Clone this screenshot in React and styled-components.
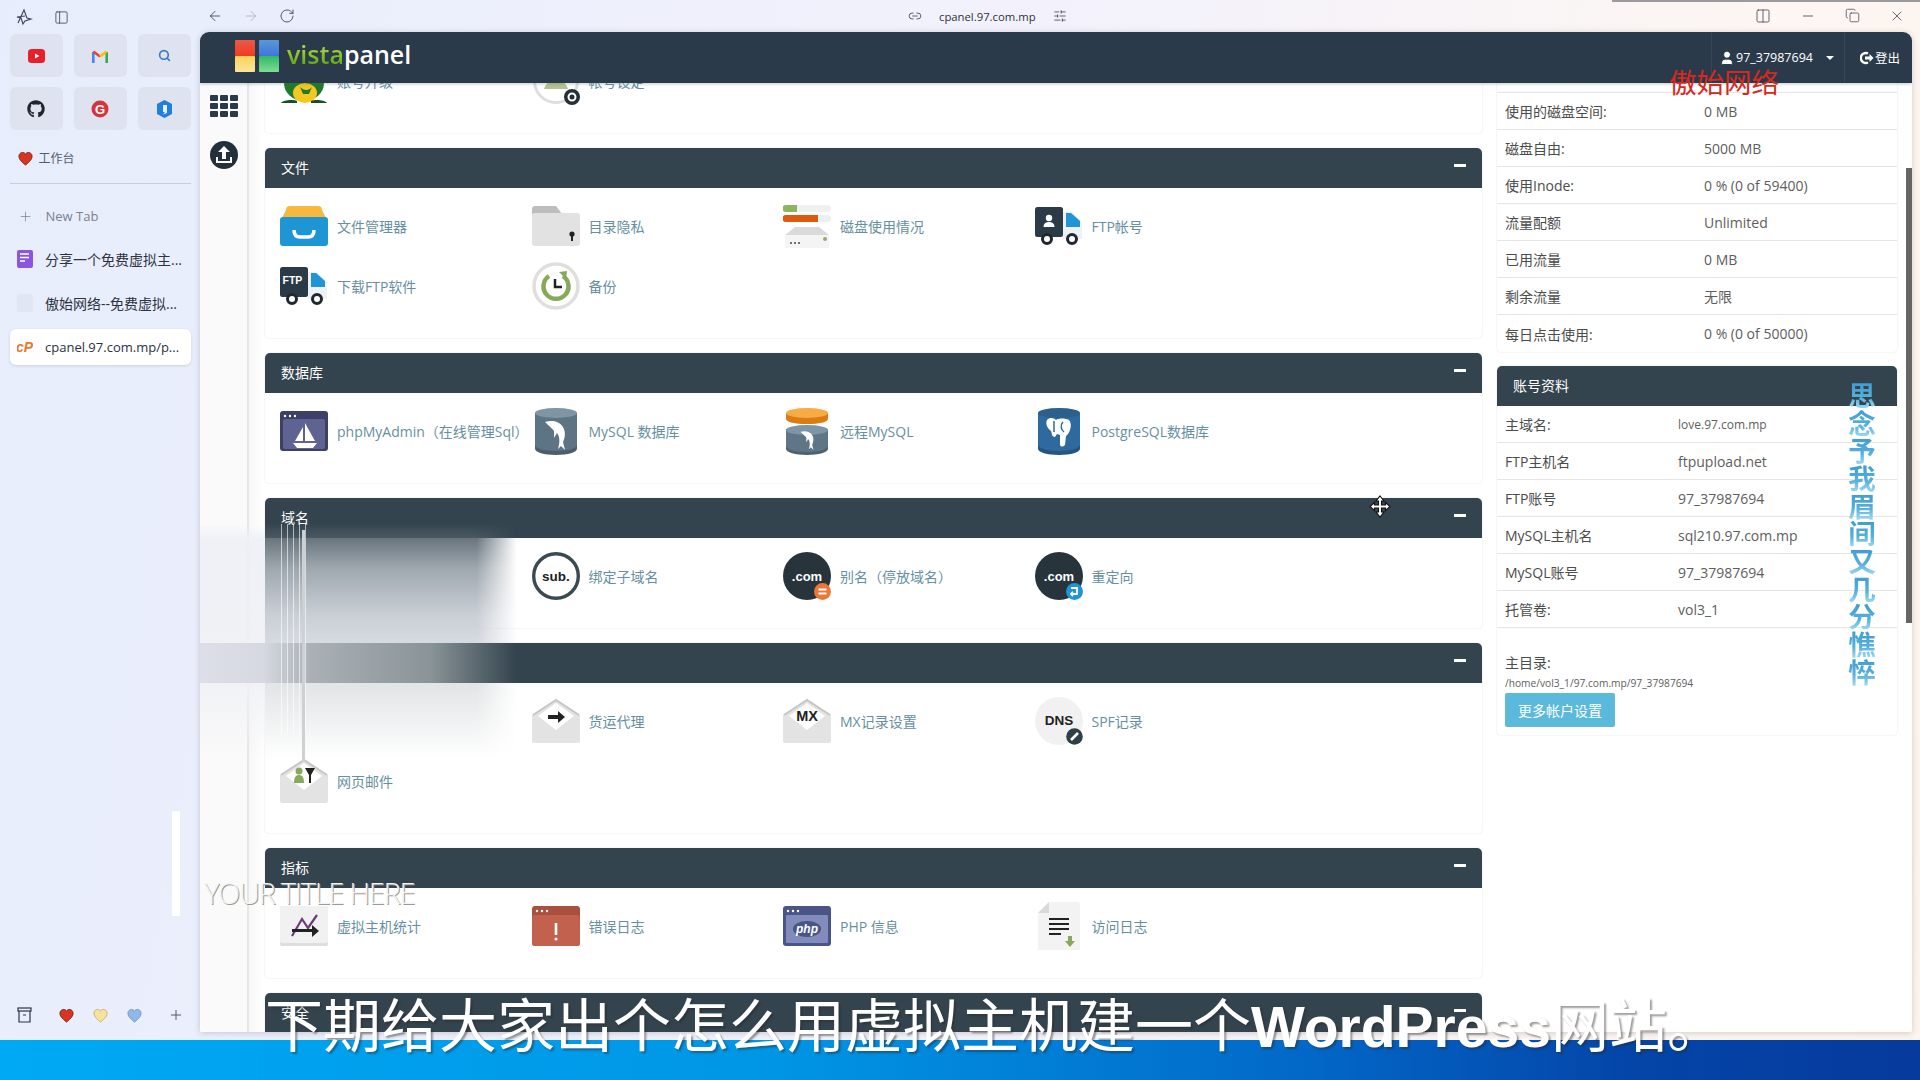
import React from 'react';
import styled, { createGlobalStyle } from 'styled-components';
import {
    ArrowLeft, ArrowRight, RotateCw, PanelLeft, Plus, Link2, SlidersHorizontal,
    Columns2, Minus, Copy, X, Search, User,
} from 'lucide-react';
import { FaGithub } from 'react-icons/fa';

const GlobalStyle = createGlobalStyle`
    html, body { margin: 0; padding: 0; background: #eef1fb; }
    * { box-sizing: border-box; }
    body { font-family: "Open Sans", "Noto Sans CJK SC", sans-serif; }
`;

const Screen = styled.div`
    position: relative;
    width: 1920px;
    height: 1080px;
    overflow: hidden;
    display: flex;
    flex-direction: column;
`;

const Upper = styled.div`
    height: 1040px;
    display: flex;
    background: linear-gradient(100deg, #e7edfc 0%, #eef0fc 30%, #f4f2fb 55%, #fdf6f2 85%, #fdf4ee 100%);
`;

const BottomStrip = styled.div`
    height: 40px;
    background: linear-gradient(to right, #00a9f4 0%, #0096e6 40%, #0268c8 68%, #0445a8 85%, #063a9c 100%);
`;

/* left browser sidebar */
const Sidebar = styled.aside`
    width: 200px;
    flex: none;
    display: flex;
    flex-direction: column;
    padding: 0 9px 15px 9.5px;
    color: #333;
`;

const SideTop = styled.div`
    height: 34px;
    display: flex;
    align-items: center;
    gap: 21px;
    padding-left: 5px;
    color: #3b4258;
`;

const TileGrid = styled.div`
    display: grid;
    grid-template-columns: repeat(3, 53px);
    grid-auto-rows: 43px;
    gap: 10px 11px;
`;

const Tile = styled.div`
    display: flex;
    align-items: center;
    justify-content: center;
    background: #dfe3ef;
    border-radius: 6px;
`;

const Workspace = styled.div`
    height: 26px;
    margin-top: 15px;
    display: flex;
    align-items: center;
    gap: 6px;
    padding-left: 8px;
    font-size: 12px;
    color: #555c6c;
`;

const SideDivider = styled.div`
    height: 1px;
    margin-top: 12px;
    background: #c9cede;
`;

const NewTab = styled.div`
    height: 20px;
    margin-top: 22px;
    display: flex;
    align-items: center;
    gap: 13px;
    padding-left: 8px;
    font-size: 13px;
    color: #7b8090;
`;

const TabRow = styled.div`
    height: 36px;
    margin-top: ${(p) => p.$top}px;
    display: flex;
    align-items: center;
    gap: 12px;
    padding-left: 7.5px;
    font-size: ${(p) => (p.$active ? 13 : 14)}px;
    white-space: nowrap;
    color: #2d3240;
    border-radius: 6px;
    background: ${(p) => (p.$active ? '#fff' : 'transparent')};
    box-shadow: ${(p) => (p.$active ? '0 1px 3px rgba(60,70,110,.18)' : 'none')};
`;

const TabBlank = styled.div`
    width: 16px;
    height: 18px;
    border-radius: 3px;
    background: #e2e6f2;
`;

const SideBottom = styled.div`
    margin-top: auto;
    height: 20px;
    display: flex;
    align-items: center;
    padding-left: 7.5px;
    color: #4a5064;
`;

const HeartGroup = styled.div`
    display: flex;
    gap: 19px;
    margin-left: 27px;
    margin-right: 26px;
`;

/* main column */
const MainColumn = styled.div`
    flex: 1;
    display: flex;
    flex-direction: column;
    padding-right: 8px;
`;

const Toolbar = styled.div`
    height: 32px;
    flex: none;
    display: grid;
    grid-template-columns: 708px auto 1fr;
    align-items: center;
    color: #3d4352;
`;

const NavGroup = styled.div`
    display: flex;
    gap: 20px;
    padding-left: 7px;
`;

const NavButton = styled.span`
    width: 16px;
    height: 16px;
    display: flex;
    color: ${(p) => (p.$off ? '#aeb4c4' : '#3d4352')};
`;

const AddressBar = styled.div`
    display: flex;
    align-items: center;
    gap: 17px;
    font-size: 11.3px;
    color: #2d3240;
`;

const WindowGroup = styled.div`
    display: flex;
    justify-content: flex-end;
    gap: 29px;
    padding-right: 7px;
`;

const Panel = styled.div`
    height: 1000px;
    display: flex;
    flex-direction: column;
    border-radius: 9px 9px 2px 2px;
    overflow: hidden;
    background: #fff;
    box-shadow: 0 1px 6px rgba(60, 50, 50, .22);
`;

const TopBar = styled.header`
    position: relative;
    z-index: 2;
    height: 51px;
    flex: none;
    display: flex;
    align-items: center;
    padding-left: 35px;
    background: #2a3a4a;
    box-shadow: 0 1px 3px rgba(60, 110, 100, .35);
`;

const LogoMark = styled.svg`
    margin-top: -3px;
`;

const LogoWord = styled.span`
    margin-left: 8px;
    margin-top: -6px;
    font-size: 25px;
    font-weight: 600;
    line-height: 1;
    color: #fff;
`;

const LogoGreen = styled.span`
    color: transparent;
    background: linear-gradient(to bottom, #b5e03e 20%, #5fa416 85%);
    -webkit-background-clip: text;
    background-clip: text;
`;

const UserMenu = styled.div`
    margin-left: auto;
    width: 134px;
    height: 51px;
    display: flex;
    align-items: center;
    padding-left: 7px;
    gap: 1px;
    font-size: 12.5px;
    color: #fff;
    border-left: 1px solid #34475a;
    border-right: 1px solid #34475a;
`;

const Caret = styled.span`
    width: 0;
    height: 0;
    margin-left: 12px;
    border-left: 4px solid transparent;
    border-right: 4px solid transparent;
    border-top: 4px solid #fff;
`;

const Logout = styled.div`
    width: 67px;
    display: flex;
    align-items: center;
    gap: 1px;
    padding-left: 15px;
    font-size: 12.5px;
    color: #fff;
    white-space: nowrap;
`;

const Below = styled.div`
    flex: 1;
    min-height: 0;
    display: flex;
`;

const Rail = styled.nav`
    width: 49px;
    flex: none;
    display: flex;
    flex-direction: column;
    align-items: center;
    gap: 24px;
    padding-top: 12px;
    background: #fafafa;
    border-right: 2px solid #e6e6e6;
`;

const RailGrid = styled.div`
    width: 28px;
    display: grid;
    grid-template-columns: repeat(3, 8px);
    grid-auto-rows: 6px;
    gap: 2px;
`;

const RailDot = styled.span`
    background: #2a3a4a;
    border-radius: 1px;
`;

const Content = styled.main`
    position: relative;
    flex: 1;
    min-width: 0;
    overflow: hidden;
    display: grid;
    grid-template-columns: 1217px 400px;
    column-gap: 15px;
    align-items: start;
    padding-left: 16px;
    background: linear-gradient(to right, #f7f7f7 0, #fff 14px);
`;

const ScrollThumb = styled.div`
    position: absolute;
    right: 0;
    top: 85px;
    width: 6px;
    height: 455px;
    background: #666;
`;

const LeftColumn = styled.div`
    margin-top: -80px;
    display: flex;
    flex-direction: column;
    gap: 15px;
`;

const RightColumn = styled.div`
    margin-top: -67px;
    display: flex;
    flex-direction: column;
    gap: 14px;
`;

const Section = styled.section`
    border-radius: 5px 5px 4px 4px;
    background: #fff;
    box-shadow: 0 0 2px rgba(0, 0, 0, .13);
    overflow: hidden;
`;

const SectionHeader = styled.div`
    height: 40px;
    display: flex;
    padding: 10px 16px 0 16px;
    font-size: 14px;
    line-height: 19px;
    color: #fff;
    background: #34444e;
`;

const Collapse = styled.span`
    width: 12px;
    height: 3px;
    margin-top: 6px;
    margin-left: auto;
    background: #fff;
`;

const SectionBody = styled.div`
    display: grid;
    grid-template-columns: repeat(4, 251.5px);
    grid-auto-rows: 60px;
    padding: 8px 0 22px 15px;
`;

const Item = styled.a`
    display: flex;
    align-items: center;
    gap: 9px;
    font-size: 14px;
    color: #66909f;
    white-space: nowrap;
`;

const IconSlot = styled.span`
    width: 48px;
    height: 48px;
    flex: none;
    display: block;
`;

const InfoRow = styled.div`
    height: 37px;
    display: flex;
    align-items: center;
    padding-left: 8px;
    font-size: 14px;
    color: #555;
    border-bottom: 1px solid #e6e6e6;
    &:last-child { border-bottom: 0; }
`;

const InfoLabel = styled.span`
    width: ${(p) => p.$width}px;
    flex: none;
    color: #4c4c4c;
`;

const InfoValue = styled.span`
    color: #5e5e5e;
    font-size: ${(p) => (p.$small ? 12 : 14)}px;
`;

const HomeBlock = styled.div`
    padding: 25px 8px 8px;
`;

const HomeLabel = styled.div`
    height: 20px;
    font-size: 14px;
    line-height: 20px;
    color: #4c4c4c;
`;

const HomePath = styled.div`
    height: 20px;
    padding-top: 1px;
    font-size: 10.2px;
    line-height: 19px;
    color: #5e5e5e;
`;

const MoreButton = styled.button`
    display: block;
    width: 110px;
    height: 34px;
    padding: 0;
    border: 0;
    border-radius: 2px;
    font: inherit;
    font-size: 14px;
    color: #fff;
    background: #5bb9dc;
`;

/* overlays burnt into the video */
const Watermark = styled.div`
    position: absolute;
    left: 1669px;
    top: 64px;
    z-index: 5;
    font-size: 27.5px;
    line-height: 38px;
    color: #d42a1e;
    white-space: nowrap;
`;

const VerticalLyric = styled.div`
    position: absolute;
    left: 1846px;
    top: 382px;
    z-index: 5;
    writing-mode: vertical-rl;
    font-size: 27.5px;
    line-height: 29px;
    font-weight: 700;
    letter-spacing: .15px;
    white-space: nowrap;
    color: transparent;
    background: repeating-linear-gradient(to bottom, #3f9cd2 0, #57b0dc 16px, #a5dcf2 27.65px);
    -webkit-background-clip: text;
    background-clip: text;
`;

const Caption = styled.div`
    position: absolute;
    left: 265px;
    top: 983px;
    z-index: 6;
    font-size: 58px;
    line-height: 84px;
    color: #fff;
    white-space: nowrap;
    text-shadow: 2px 2px 2px rgba(40, 40, 40, .45);
`;

const CaptionLatin = styled.span`
    font-family: "Liberation Sans", sans-serif;
    font-weight: 700;
    font-size: 57px;
`;

const VideoTitle = styled.div`
    position: absolute;
    left: 204px;
    top: 874px;
    z-index: 5;
    font-family: "Open Sans", sans-serif;
    font-weight: 300;
    font-size: 29px;
    line-height: 38px;
    letter-spacing: -1.27px;
    color: #f5f5f5;
    white-space: nowrap;
    text-shadow: 1px 1px 0 #9a9a90;
`;

const SmearRight = styled.div`
    position: absolute;
    left: 265px;
    top: 523px;
    z-index: 3;
    width: 252px;
    height: 240px;
    background: linear-gradient(to bottom,
        rgba(52, 68, 78, 0) 0,
        rgba(78, 92, 102, .85) 15px,
        rgba(150, 160, 168, .92) 45px,
        rgba(196, 201, 208, .92) 90px,
        rgba(210, 214, 222, .9) 120px,
        rgba(224, 227, 228, .95) 160px,
        rgba(255, 255, 255, 0) 237px);
    -webkit-mask-image: linear-gradient(to right, #000 0, #000 84%, transparent 100%);
    mask-image: linear-gradient(to right, #000 0, #000 84%, transparent 100%);
`;

const SmearBand = styled.div`
    position: absolute;
    left: 200px;
    top: 643px;
    z-index: 3;
    width: 316px;
    height: 40px;
    background: linear-gradient(to right, #dcdfe7 0, #d6d9e1 20%, #aab0b6 35%, #8a9498 73%, #34444e 100%);
`;

const SmearLeft = styled.div`
    position: absolute;
    left: 200px;
    top: 525px;
    z-index: 3;
    width: 65px;
    height: 237px;
    background: linear-gradient(to bottom,
        rgba(238, 240, 246, 0) 0,
        rgba(238, 240, 246, .9) 14px,
        rgba(240, 241, 245, .9) 158px,
        rgba(240, 241, 245, 0) 235px);
`;

const Streaks = styled.div`
    position: absolute;
    left: 281px;
    top: 524px;
    z-index: 4;
    width: 28px;
    height: 210px;
    background: repeating-linear-gradient(to right, rgba(255, 255, 255, .6) 0 1px, transparent 1px 6px);
`;

const StreakLine = styled.div`
    position: absolute;
    left: 302px;
    top: 530px;
    z-index: 4;
    width: 3px;
    height: 232px;
    background: #cdd1d4;
`;

const WhiteBar = styled.div`
    position: absolute;
    left: 172px;
    top: 811px;
    z-index: 3;
    width: 8px;
    height: 105px;
    background: #fff;
`;

const TopShadow = styled.div`
    position: absolute;
    left: 1612px;
    top: 0;
    z-index: 3;
    width: 308px;
    height: 2px;
    background: #9b9b9f;
`;

const CursorMark = styled.svg`
    position: absolute;
    left: 1369px;
    top: 495px;
    z-index: 5;
`;

const Base = ({ children }) => (
    <svg width="48" height="48" viewBox="0 0 48 48" fontFamily="Liberation Sans, sans-serif">{children}</svg>
);

const Cylinder = ({ top, body, foot, y = 1 }) => (
    <g>
        <path d={`M3 ${y + 5}V42c0 3 9 6 21 6s21-3 21-6V${y + 5}z`} fill={foot} />
        <path d={`M3 ${y + 5}V38c0 3 9 6 21 6s21-3 21-6V${y + 5}z`} fill={body} />
        <ellipse cx="24" cy={y + 5} rx="21" ry="5" fill={top} />
    </g>
);

const Dolphin = ({ scale = 1, x = 0, y = 0 }) => (
    <path
        transform={`translate(${x} ${y}) scale(${scale})`}
        d="M13 15C20 13 27 14 31 20C34 25 33 31 31 35L33 43L29 39L26 42C28 35 28 30 25 26L22 31L22 24C20 21 17 19 13 15z"
        fill="#fff"
    />
);

const Envelope = ({ children }) => (
    <Base>
        <path d="M0 18 24 3 48 18v26a2 2 0 0 1-2 2H2a2 2 0 0 1-2-2z" fill="#e3e3e3" />
        <path d="M1 18 24 3l23 15" fill="none" stroke="#c6c6c6" strokeWidth="2" />
        <path d="M24 6 42 19 24 33 6 19z" fill="#fff" />
        {children}
    </Base>
);

const Truck = ({ children }) => (
    <Base>
        <path d="M28 10h9l10 10v17H28z" fill="#eef2f5" />
        <path d="M31 11h5l9 8v6H31z" fill="#1f95d6" />
        <rect x="0" y="5" width="28" height="30" rx="2.5" fill="#2b3a47" />
        <circle cx="12" cy="37" r="4.5" fill="#fff" stroke="#1f2830" strokeWidth="3" />
        <circle cx="37" cy="37" r="4.5" fill="#fff" stroke="#1f2830" strokeWidth="3" />
        {children}
    </Base>
);

const WindowDots = () => (
    <g fill="#fff">
        <circle cx="5" cy="9" r="1.2" /><circle cx="10" cy="9" r="1.2" /><circle cx="15" cy="9" r="1.2" />
    </g>
);

const icons = {
    frog: (
        <Base>
            <ellipse cx="24" cy="26" rx="20" ry="18" fill="#1f7a2e" />
            <ellipse cx="25" cy="36" rx="12" ry="10" fill="#f4c820" />
            <path d="M20 30c4 4 9 4 12 0l-3 7h-6z" fill="#1f7a2e" />
            <path d="M1 46c2-3 12-4 16-2v2zM47 46c-2-3-12-4-16-2v2z" fill="#14521f" />
        </Base>
    ),
    account: (
        <Base>
            <circle cx="24" cy="24" r="21.5" fill="#fff" stroke="#dedede" strokeWidth="3" />
            <path d="M12 32c2-7 7-8 12-8s10 1 12 8z" fill="#b6c291" />
            <circle cx="40" cy="40" r="8" fill="#262f36" />
            <circle cx="40" cy="40" r="3.5" fill="none" stroke="#fff" strokeWidth="2" />
        </Base>
    ),
    cabinet: (
        <Base>
            <path d="M6 8a4 4 0 0 1 4-4h28a4 4 0 0 1 4 4l5 10H1z" fill="#f6b93c" />
            <path d="M0 18a3 3 0 0 1 3-3h42a3 3 0 0 1 3 3v23a3 3 0 0 1-3 3H3a3 3 0 0 1-3-3z" fill="#1e96d5" />
            <path d="M14 28c0 6 3 7 6 7h8c3 0 6-1 6-7" fill="none" stroke="#fff" strokeWidth="3.5" />
        </Base>
    ),
    folder: (
        <Base>
            <path d="M0 7a3 3 0 0 1 3-3h21l6 8H0z" fill="#bdbdbd" />
            <rect x="0" y="11" width="48" height="33" rx="3" fill="#e2e2e2" />
            <circle cx="40" cy="32" r="2.6" fill="#222" />
            <rect x="39" y="32" width="2" height="7" fill="#222" />
        </Base>
    ),
    disk: (
        <Base>
            <rect x="0" y="3" width="48" height="7" rx="3.5" fill="#eef1ee" />
            <path d="M3 3h11v7H3a3.5 3.5 0 0 1 0-7z" fill="#8fb45e" />
            <rect x="0" y="13" width="48" height="7" rx="3.5" fill="#e8f0f4" />
            <path d="M3 13h32v7H3a3.5 3.5 0 0 1 0-7z" fill="#dd5a10" />
            <path d="M12 25h24l10 8H2z" fill="#dadada" />
            <rect x="2" y="33" width="44" height="13" fill="#f4f4f4" />
            <circle cx="8" cy="41" r="1" fill="#444" /><circle cx="12" cy="41" r="1" fill="#444" /><circle cx="16" cy="41" r="1" fill="#444" />
            <circle cx="42" cy="37" r="2" fill="#9aa868" />
        </Base>
    ),
    ftpUser: (
        <Truck>
            <circle cx="14" cy="16" r="3.2" fill="#fff" />
            <path d="M8.500 25c0-4 3-5 5.500-5s5.500 1 5.500 5z" fill="#fff" />
        </Truck>
    ),
    ftpDown: (
        <Truck>
            <text x="2.500" y="22" fontSize="10.5" fontWeight="700" fill="#fff">FTP</text>
        </Truck>
    ),
    backup: (
        <Base>
            <circle cx="24" cy="24" r="22" fill="#fff" stroke="#dfdfdf" strokeWidth="3.5" />
            <path d="M31 14a12.5 12.5 0 1 1-14 0" fill="none" stroke="#86a95a" strokeWidth="4.5" />
            <path d="M27 10l8-1-1 8z" fill="#86a95a" />
            <path d="M23 17v8h7" fill="none" stroke="#222" strokeWidth="2.5" />
        </Base>
    ),
    pma: (
        <Base>
            <rect y="4" width="48" height="40" rx="3" fill="#3d3f69" />
            <rect x="3" y="12" width="42" height="30" rx="2" fill="#5f6391" />
            <WindowDots />
            <path d="M25 16v18h10zM23 20v14h-8zM13 36h24l-4 5H17z" fill="#fff" />
        </Base>
    ),
    mysql: (
        <Base>
            <Cylinder top="#7d95a4" body="#5d7484" foot="#4b5e6c" />
            <Dolphin />
        </Base>
    ),
    remote: (
        <Base>
            <path d="M3 6v6c0 3 9 5 21 5s21-2 21-5V6z" fill="#dd7a13" />
            <ellipse cx="24" cy="6" rx="21" ry="5" fill="#f6ab45" />
            <path d="M3 22v20c0 3 9 6 21 6s21-3 21-6V22z" fill="#4e6170" />
            <path d="M3 22v17c0 3 9 6 21 6s21-3 21-6V22z" fill="#5f7686" />
            <ellipse cx="24" cy="23" rx="21" ry="5" fill="#7d95a4" />
            <Dolphin scale={.65} x="9" y="15" />
        </Base>
    ),
    postgres: (
        <Base>
            <Cylinder top="#2d5f8c" body="#2f6a9e" foot="#24547f" />
            <path d="M12 13c3-3 7-2 9 0 3-2 9-2 13 0 3 3 2 10-1 14l-2 2-1 9c-2 2-4 2-5 0V28l-3-1-2 3c-3 0-3-3-4-6-3-2-6-7-4-11z" fill="#fff" />
            <path d="M19 14v11M28 15c-3 3-2 8 1 10" fill="none" stroke="#2f6a9e" strokeWidth="1.5" />
        </Base>
    ),
    sub: (
        <Base>
            <circle cx="24" cy="24" r="22.3" fill="#fff" stroke="#3b4950" strokeWidth="3.4" />
            <text x="24" y="28.5" textAnchor="middle" fontSize="13.5" fontWeight="700" fill="#222">sub.</text>
        </Base>
    ),
    alias: (
        <Base>
            <circle cx="24" cy="24" r="24" fill="#28343c" />
            <text x="24" y="28.5" textAnchor="middle" fontSize="13" fontWeight="700" fill="#fff">.com</text>
            <circle cx="39.5" cy="39.5" r="8.5" fill="#ea7737" />
            <path d="M35.5 37.5h8M35.5 41.5h8" stroke="#fff" strokeWidth="2" />
        </Base>
    ),
    redirect: (
        <Base>
            <circle cx="24" cy="24" r="24" fill="#28343c" />
            <text x="24" y="28.5" textAnchor="middle" fontSize="13" fontWeight="700" fill="#fff">.com</text>
            <circle cx="39.5" cy="39.5" r="8.5" fill="#1f95d6" />
            <path d="M36 36h6v6h-6M38 40l-2 2 2 2" fill="none" stroke="#fff" strokeWidth="1.8" />
        </Base>
    ),
    forwarder: (
        <Envelope>
            <path d="M16 18h10v-4l7 6-7 6v-4H16z" fill="#222" />
        </Envelope>
    ),
    mx: (
        <Envelope>
            <text x="24" y="24" textAnchor="middle" fontSize="14.5" fontWeight="700" fill="#222">MX</text>
        </Envelope>
    ),
    spf: (
        <Base>
            <circle cx="24" cy="24" r="24" fill="#f1f1f1" />
            <text x="24" y="28" textAnchor="middle" fontSize="13.5" fontWeight="700" fill="#222">DNS</text>
            <circle cx="39.5" cy="39.5" r="8.3" fill="#2e3f48" />
            <path d="M36 43l7-7" stroke="#fff" strokeWidth="2.6" />
        </Base>
    ),
    webmail: (
        <Envelope>
            <circle cx="19" cy="14" r="3.5" fill="#86a95a" />
            <path d="M14 26c0-6 2-8 5-8s5 2 5 8z" fill="#86a95a" />
            <path d="M25 11h10l-4 7v8h-2v-8z" fill="#222" />
        </Envelope>
    ),
    stats: (
        <Base>
            <rect y="4" width="48" height="40" rx="2" fill="#dedede" />
            <rect y="4" width="48" height="37" rx="2" fill="#f1f1f1" />
            <path d="M12 34 22 17l6 9 9-13" fill="none" stroke="#6e3a78" strokeWidth="2.2" />
            <path d="M12 27h20v-4l7 6-7 6v-5H12z" fill="#222" />
        </Base>
    ),
    errorLog: (
        <Base>
            <rect y="4" width="48" height="40" rx="3" fill="#a9503f" />
            <rect x="0" y="13" width="48" height="31" rx="3" fill="#c2614e" />
            <WindowDots />
            <path d="M24 21v12" stroke="#fff" strokeWidth="2.6" />
            <circle cx="24" cy="37" r="1.6" fill="#fff" />
        </Base>
    ),
    phpInfo: (
        <Base>
            <rect y="4" width="48" height="40" rx="3" fill="#4a5587" />
            <rect x="3" y="13" width="42" height="28" rx="1" fill="#828bba" />
            <WindowDots />
            <ellipse cx="24" cy="27" rx="14" ry="8" fill="#4a5587" />
            <text x="24" y="31" textAnchor="middle" fontSize="12" fontWeight="700" fontStyle="italic" fill="#fff">php</text>
        </Base>
    ),
    accessLog: (
        <Base>
            <path d="M14 0h28a3 3 0 0 1 3 3v45H3V11z" fill="#f3f3f3" />
            <path d="M14 0v11H3z" fill="#d9d9d9" />
            <path d="M14 17h20M14 22h20M14 27h20M14 32h12" stroke="#222" strokeWidth="2.2" />
            <path d="M33 34h4v5h3l-5 6-5-6h3z" fill="#86a95a" />
        </Base>
    ),
};

const SECTIONS = [
    { title: '', items: [['frog', '账号升级'], ['account', '帐号设定']] },
    { title: '文件', items: [['cabinet', '文件管理器'], ['folder', '目录隐私'], ['disk', '磁盘使用情况'], ['ftpUser', 'FTP帐号'], ['ftpDown', '下载FTP软件'], ['backup', '备份']] },
    { title: '数据库', items: [['pma', 'phpMyAdmin（在线管理Sql）'], ['mysql', 'MySQL 数据库'], ['remote', '远程MySQL'], ['postgres', 'PostgreSQL数据库']] },
    { title: '域名', items: [null, ['sub', '绑定子域名'], ['alias', '别名（停放域名）'], ['redirect', '重定向']] },
    { title: '', items: [null, ['forwarder', '货运代理'], ['mx', 'MX记录设置'], ['spf', 'SPF记录'], ['webmail', '网页邮件']] },
    { title: '指标', items: [['stats', '虚拟主机统计'], ['errorLog', '错误日志'], ['phpInfo', 'PHP 信息'], ['accessLog', '访问日志']] },
    { title: '安全', items: [] },
];

const USAGE = [
    ['', ''],
    ['使用的磁盘空间:', '0 MB'],
    ['磁盘自由:', '5000 MB'],
    ['使用Inode:', '0 % (0 of 59400)'],
    ['流量配额', 'Unlimited'],
    ['已用流量', '0 MB'],
    ['剩余流量', '无限'],
    ['每日点击使用:', '0 % (0 of 50000)'],
];

const ACCOUNT = [
    ['主域名:', 'love.97.com.mp', true],
    ['FTP主机名', 'ftpupload.net'],
    ['FTP账号', '97_37987694'],
    ['MySQL主机名', 'sql210.97.com.mp'],
    ['MySQL账号', '97_37987694'],
    ['托管卷:', 'vol3_1'],
];

const Heart = ({ fill, edge }) => (
    <svg width="15" height="15" viewBox="0 0 16 16">
        <path d="M8 15C3 11 1 8.500 1 5.500 1 3 3 1.500 5 1.500c1.300 0 2.400.7 3 2 .6-1.300 1.700-2 3-2 2 0 4 1.500 4 4 0 3-2 5.500-7 9.500z" fill={fill} stroke={edge} strokeWidth="1" />
    </svg>
);

const Logo = () => (
    <LogoMark width="44" height="32" viewBox="0 0 44 32">
        <defs>
            <linearGradient id="logoRed" x1="0" y1="0" x2="0" y2="1"><stop offset="0" stopColor="#e85a4a" /><stop offset="1" stopColor="#f23a20" /></linearGradient>
            <linearGradient id="logoYellow" x1="0" y1="0" x2="0" y2="1"><stop offset="0" stopColor="#fcd257" /><stop offset="1" stopColor="#f9e59a" /></linearGradient>
            <linearGradient id="logoBlue" x1="0" y1="0" x2="0" y2="1"><stop offset="0" stopColor="#5a97d8" /><stop offset="1" stopColor="#3f76dc" /></linearGradient>
            <linearGradient id="logoGreen" x1="0" y1="0" x2="0" y2="1"><stop offset="0" stopColor="#2eb866" /><stop offset="1" stopColor="#7fdc94" /></linearGradient>
        </defs>
        <rect x="0" y="0" width="20" height="16" rx="1" fill="url(#logoRed)" />
        <rect x="0" y="16" width="20" height="16" rx="1" fill="url(#logoYellow)" />
        <rect x="24" y="0" width="20" height="16" rx="1" fill="url(#logoBlue)" />
        <rect x="24" y="16" width="20" height="16" rx="1" fill="url(#logoGreen)" />
    </LogoMark>
);

const App = () => {
    return (
        <Screen>
            <GlobalStyle />
            <Upper>
                <Sidebar>
                    <SideTop>
                        <svg width="18" height="18" viewBox="0 0 18 18" fill="none" stroke="#3b4258" strokeWidth="1.1">
                            <path d="M3 15 9 2l3 8 4 1-6 2-2 3-2-6-4-1 8-1" />
                        </svg>
                        <PanelLeft size={15} strokeWidth={1.3} />
                    </SideTop>
                    <TileGrid>
                        <Tile>
                            <svg width="17" height="14" viewBox="0 0 17 14">
                                <rect width="17" height="14" rx="3.500" fill="#e8202a" />
                                <path d="M7 4.500 11.500 7 7 9.500z" fill="#fff" />
                            </svg>
                        </Tile>
                        <Tile>
                            <svg width="16" height="14" viewBox="0 0 16 14" fill="none" strokeWidth="2.600">
                                <path d="M1.300 14V3" stroke="#4285f4" />
                                <path d="M14.700 14V3" stroke="#34a853" />
                                <path d="M1.300 2.500 8 7.500" stroke="#ea4335" />
                                <path d="M8 7.500l6.700-5" stroke="#fbbc04" />
                            </svg>
                        </Tile>
                        <Tile><Search size={13} color="#3a78c9" strokeWidth={3} /></Tile>
                        <Tile><FaGithub size={18} color="#1e2530" /></Tile>
                        <Tile>
                            <svg width="18" height="18" viewBox="0 0 18 18" fontFamily="Liberation Sans, sans-serif">
                                <circle cx="9" cy="9" r="8.500" fill="#d9333a" />
                                <text x="9" y="13.500" textAnchor="middle" fontSize="13" fontWeight="700" fill="#fff">G</text>
                            </svg>
                        </Tile>
                        <Tile>
                            <svg width="15" height="18" viewBox="0 0 15 18">
                                <path d="M7.500 0 15 4v10l-7.500 4L0 14V4z" fill="#1f7fe2" />
                                <path d="M6 5h4v8l-4 1.500 2-2.500H6z" fill="#e8f3ff" />
                            </svg>
                        </Tile>
                    </TileGrid>
                    <Workspace><Heart fill="#d9341f" edge="#7d2a20" />工作台</Workspace>
                    <SideDivider />
                    <NewTab><Plus size={15} strokeWidth={1.2} />New Tab</NewTab>
                    <TabRow $top={15}>
                        <svg width="16" height="18" viewBox="0 0 16 18">
                            <rect width="16" height="18" rx="2" fill="#8a55e0" />
                            <path d="M3 4h9M3 7.500h9M3 11h5" stroke="#fff" strokeWidth="1.400" />
                        </svg>
                        分享一个免费虚拟主...
                    </TabRow>
                    <TabRow $top={8}><TabBlank />傲始网络--免费虚拟...</TabRow>
                    <TabRow $top={8} $active>
                        <svg width="16" height="14" viewBox="0 0 16 14" fontFamily="Liberation Sans, sans-serif">
                            <text x="-1" y="12" fontSize="14" fontWeight="700" fontStyle="italic" fill="#e8772e">cP</text>
                        </svg>
                        cpanel.97.com.mp/p...
                    </TabRow>
                    <SideBottom>
                        <svg width="15" height="16" viewBox="0 0 15 16" fill="none" stroke="#2e3448" strokeWidth="1.200">
                            <rect x="1" y="1" width="13" height="3" />
                            <path d="M2 4v11h11V4M6 8h3" />
                        </svg>
                        <HeartGroup>
                            <Heart fill="#d9341f" edge="#6d2418" />
                            <Heart fill="#f7e29a" edge="#c8b070" />
                            <Heart fill="#8fb8e8" edge="#7798c8" />
                        </HeartGroup>
                        <Plus size={16} strokeWidth={1.400} />
                    </SideBottom>
                </Sidebar>

                <MainColumn>
                    <Toolbar>
                        <NavGroup>
                            <NavButton><ArrowLeft size={16} strokeWidth={1.300} /></NavButton>
                            <NavButton $off><ArrowRight size={16} strokeWidth={1.300} /></NavButton>
                            <NavButton><RotateCw size={16} strokeWidth={1.300} /></NavButton>
                        </NavGroup>
                        <AddressBar>
                            <Link2 size={14} strokeWidth={1.300} />
                            cpanel.97.com.mp
                            <SlidersHorizontal size={14} strokeWidth={1.300} />
                        </AddressBar>
                        <WindowGroup>
                            <Columns2 size={16} strokeWidth={1.200} />
                            <Minus size={16} strokeWidth={1.200} />
                            <Copy size={15} strokeWidth={1.200} />
                            <X size={16} strokeWidth={1.200} />
                        </WindowGroup>
                    </Toolbar>
                    <Panel>
                        <TopBar>
                            <Logo />
                            <LogoWord><LogoGreen>vista</LogoGreen>panel</LogoWord>
                            <UserMenu>
                                <User size={16} fill="#fff" strokeWidth={1} />
                                97_37987694
                                <Caret />
                            </UserMenu>
                            <Logout>
                                <svg width="14" height="14" viewBox="0 0 14 14" fill="none">
                                    <path d="M8 2.500A5 5 0 1 0 8 11.500" stroke="#fff" strokeWidth="2.400" />
                                    <path d="M5 5.500h4.500V3l4 4-4 4V8.500H5z" fill="#fff" />
                                </svg>
                                登出
                            </Logout>
                        </TopBar>
                        <Below>
                            <Rail>
                                <RailGrid>
                                    {Array.from({ length: 9 }).map((_, i) => <RailDot key={i} />)}
                                </RailGrid>
                                <svg width="28" height="28" viewBox="0 0 28 28">
                                    <circle cx="14" cy="14" r="14" fill="#232f3b" />
                                    <path d="M14 5l6 6h-4v7h-4v-7H8z" fill="#fff" />
                                    <path d="M7 16v5h14v-5" fill="none" stroke="#fff" strokeWidth="2" />
                                </svg>
                            </Rail>
                            <Content>
                                <LeftColumn>
                                    {SECTIONS.map((section, i) => (
                                        <Section key={i}>
                                            <SectionHeader>
                                                {section.title}
                                                <Collapse />
                                            </SectionHeader>
                                            <SectionBody>
                                                {section.items.map((item, j) => (
                                                    item ? (
                                                        <Item key={j}>
                                                            <IconSlot>{icons[item[0]]}</IconSlot>
                                                            {item[1]}
                                                        </Item>
                                                    ) : <span key={j} />
                                                ))}
                                            </SectionBody>
                                        </Section>
                                    ))}
                                </LeftColumn>
                                <RightColumn>
                                    <Section>
                                        <SectionHeader />
                                        {USAGE.map(([label, value], i) => (
                                            <InfoRow key={i}>
                                                <InfoLabel $width={199}>{label}</InfoLabel>
                                                <InfoValue>{value}</InfoValue>
                                            </InfoRow>
                                        ))}
                                    </Section>
                                    <Section>
                                        <SectionHeader>账号资料</SectionHeader>
                                        {ACCOUNT.map(([label, value, small]) => (
                                            <InfoRow key={label}>
                                                <InfoLabel $width={173}>{label}</InfoLabel>
                                                <InfoValue $small={small}>{value}</InfoValue>
                                            </InfoRow>
                                        ))}
                                        <HomeBlock>
                                            <HomeLabel>主目录:</HomeLabel>
                                            <HomePath>/home/vol3_1/97.com.mp/97_37987694</HomePath>
                                            <MoreButton>更多帐户设置</MoreButton>
                                        </HomeBlock>
                                    </Section>
                                </RightColumn>
                                <ScrollThumb />
                            </Content>
                        </Below>
                    </Panel>
                </MainColumn>
            </Upper>
            <BottomStrip />

            <TopShadow />
            <WhiteBar />
            <SmearLeft />
            <SmearRight />
            <SmearBand />
            <Streaks />
            <StreakLine />
            <Watermark>傲始网络</Watermark>
            <VerticalLyric>思念予我眉间又几分憔悴</VerticalLyric>
            <VideoTitle>YOUR TITLE HERE</VideoTitle>
            <CursorMark width="22" height="23" viewBox="0 0 22 23">
                <path d="M11 1L15 6H12.500V10H16.500V7.500L21 11.500L16.500 15.500V13H12.500V17H15L11 22L7 17H9.500V13H5.500V15.500L1 11.500L5.500 7.500V10H9.500V6H7z" fill="#fff" stroke="#111" strokeWidth="1.100" />
            </CursorMark>
            <Caption>下期给大家出个怎么用虚拟主机建一个<CaptionLatin>WordPress</CaptionLatin>网站。</Caption>
        </Screen>
    );
};

export default App;
